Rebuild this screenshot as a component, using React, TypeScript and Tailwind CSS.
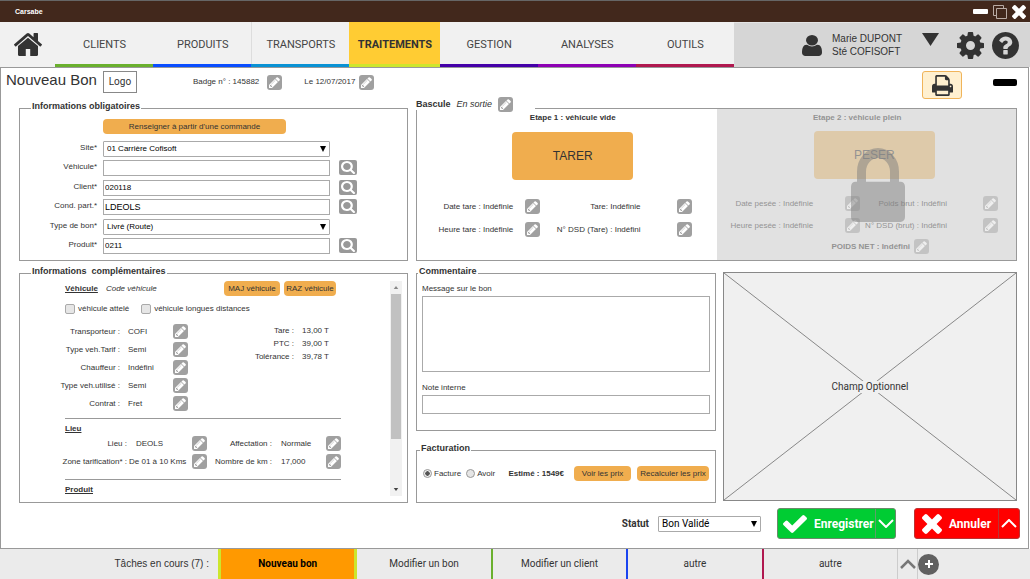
import React from "react";

type Glyph = { box: string; d: string };

const ICONS: Record<string, Glyph> = {
  home: {
    box: "90 250 1612 1290",
    d: "M1472 992v480q0 26-19 45t-45 19h-384v-384h-256v384h-384q-26 0-45-19t-19-45v-480q0-1 .5-3t.5-3l575-474 575 474q1 2 1 6zm223-69l-62 74q-8 9-21 11h-3q-13 0-21-7l-692-577-692 577q-12 8-24 7-13-2-21-11l-62-74q-8-10-7-23.5t11-21.5l719-599q32-26 76-26t76 26l244 204v-195q0-14 9-23t23-9h192q14 0 23 9t9 23v408l219 182q10 8 11 21.5t-7 23.5z",
  },
  user: {
    box: "256 128 1280 1536",
    d: "M1536 1399q0 109-62.5 187t-150.5 78h-854q-88 0-150.5-78t-62.5-187q0-85 8.5-160.5t31.5-152 58.5-131 94-89 134.5-34.5q131 128 313 128t313-128q76 0 134.5 34.5t94 89 58.5 131 31.5 152 8.5 160.5zm-256-887q0 159-112.5 271.5t-271.5 112.5-271.5-112.5-112.5-271.5 112.5-271.5 271.5-112.5 271.5 112.5 112.5 271.5z",
  },
  cog: {
    box: "128 128 1536 1536",
    d: "M1152 896q0-106-75-181t-181-75-181 75-75 181 75 181 181 75 181-75 75-181zm512-109v222q0 12-8 23t-20 13l-185 28q-19 54-39 91 35 50 107 138 10 12 10 25t-9 23q-27 37-99 108t-94 71q-12 0-26-9l-138-108q-44 23-91 38-16 136-29 186-7 28-36 28h-222q-14 0-24.5-8.5t-11.5-21.5l-28-184q-49-16-90-37l-141 107q-10 9-25 9-14 0-25-11-126-114-165-168-7-10-7-23 0-12 8-23 15-21 51-66.5t54-70.5q-27-50-41-99l-183-27q-13-2-21-12.5t-8-23.5v-222q0-12 8-23t19-13l186-28q14-46 39-92-40-57-107-138-10-12-10-24 0-10 9-23 26-36 98.5-107.5t94.5-71.5q13 0 26 10l138 107q44-23 91-38 16-136 29-186 7-28 36-28h222q14 0 24.5 8.5t11.5 21.5l28 184q49 16 90 37l142-107q9-9 24-9 13 0 25 10 129 119 165 170 7 8 7 22 0 12-8 23-15 21-51 66.5t-54 70.5q26 50 41 98l183 28q13 2 21 12.5t8 23.5z",
  },
  help: {
    box: "128 128 1536 1536",
    d: "M1024 1376v-192q0-14-9-23t-23-9h-192q-14 0-23 9t-9 23v192q0 14 9 23t23 9h192q14 0 23-9t9-23zm256-672q0-88-55.5-163t-138.5-116-170-41q-243 0-371 213-15 24 8 42l132 100q7 6 19 6 16 0 25-12 53-68 86-92 34-24 86-24 48 0 85.5 26t37.5 59q0 38-20 61t-68 45q-63 28-115.5 86.5t-52.5 125.5v36q0 14 9 23t23 9h192q14 0 23-9t9-23q0-19 21.5-49.5t54.5-49.5q32-18 49-28.5t46-35 44.5-48 28-60.5 12.5-81zm384 192q0 209-103 385.5t-279.5 279.5-385.5 103-385.5-103-279.5-279.5-103-385.5 103-385.5 279.5-279.5 385.5-103 385.5 103 279.5 279.5 103 385.5z",
  },
  print: {
    box: "64 128 1664 1536",
    d: "M448 1536h896v-256h-896v256zm0-640h896v-384h-160q-40 0-68-28t-28-68v-160h-640v640zm1152 64q0-26-19-45t-45-19-45 19-19 45 19 45 45 19 45-19 19-45zm128 0v416q0 13-9.5 22.5t-22.5 9.5h-224v160q0 40-28 68t-68 28h-960q-40 0-68-28t-28-68v-160h-224q-13 0-22.5-9.5t-9.5-22.5v-416q0-79 56.5-135.5t135.5-56.5h64v-544q0-40 28-68t68-28h672q40 0 88 20t76 48l152 152q28 28 48 76t20 88v256h64q79 0 135.5 56.5t56.5 135.5z",
  },
  pencil: {
    box: "128 128 1536 1536",
    d: "M491 1536l91-91-235-235-91 91v107h128v128h107zm523-928q0-22-22-22-10 0-17 7l-542 542q-7 7-7 17 0 22 22 22 10 0 17-7l542-542q7-7 7-17zm-54-192l416 416-832 832h-416v-416zm683 96q0 53-37 90l-166 166-416-416 166-165q36-38 90-38 53 0 91 38l235 234q37 39 37 91z",
  },
  search: {
    box: "64 128 1664 1664",
    d: "M1216 832q0-185-131.5-316.5t-316.5-131.5-316.5 131.5-131.5 316.5 131.5 316.5 316.5 131.5 316.5-131.5 131.5-316.5zm512 832q0 52-38 90t-90 38q-54 0-90-38l-343-342q-179 124-399 124-143 0-273.5-55.5t-225-150-150-225-55.5-273.5 55.5-273.5 150-225 225-150 273.5-55.5 273.5 55.5 225 150 150 225 55.5 273.5q0 220-124 399l343 343q37 37 37 90z",
  },
  lock: {
    box: "320 128 1152 1408",
    d: "M640 768h512v-192q0-106-75-181t-181-75-181 75-75 181v192zm832 96v576q0 40-28 68t-68 28h-960q-40 0-68-28t-28-68v-576q0-40 28-68t68-28h32v-192q0-184 132-316t316-132 316 132 132 316v192h32q40 0 68 28t28 68z",
  },
  check: {
    box: "121 334 1550 1188",
    d: "M1671 566q0 40-28 68l-724 724-136 136q-28 28-68 28t-68-28l-136-136-362-362q-28-28-28-68t28-68l136-136q28-28 68-28t68 28l294 295 656-657q28-28 68-28t68 28l136 136q28 28 28 68z",
  },
  times: {
    box: "302 366 1188 1188",
    d: "M1490 1322q0 40-28 68l-136 136q-28 28-68 28t-68-28l-294-294-294 294q-28 28-68 28t-68-28l-136-136q-28-28-28-68t28-68l294-294-294-294q-28-28-28-68t28-68l136-136q28-28 68-28t68 28l294 294 294-294q28-28 68-28t68 28l136 136q28 28 28 68t-28 68l-294 294 294 294q28 28 28 68z",
  },
};

function Icon({ name, className }: { name: string; className: string }) {
  const glyph = ICONS[name];
  return (
    <svg viewBox={glyph.box} preserveAspectRatio="none" fill="currentColor" aria-hidden="true" className={className}>
      <path d={glyph.d} />
    </svg>
  );
}

function EditButton({ label }: { label: string }) {
  return (
    <button aria-label={`Modifier ${label}`} className="flex size-[15px] shrink-0 items-center justify-center rounded-[3px] bg-[#a0a0a0] text-white">
      <Icon name="pencil" className="size-[11px]" />
    </button>
  );
}

function Panel({ title, className = "", children }: { title: string; className?: string; children: React.ReactNode }) {
  return (
    <fieldset className={`min-w-0 border border-[#999] ${className}`}>
      <legend className="h-4 whitespace-pre px-px text-[9px] leading-3 font-bold">{title}</legend>
      {children}
    </fieldset>
  );
}

function SelectBox({ id, value, className }: { id: string; value: string; className: string }) {
  return (
    <div className="relative">
      <select id={id} className={`block h-4 w-full appearance-none rounded-[1px] border border-[#aaa] bg-white pr-4 pl-[3px] text-black ${className}`}>
        <option>{value}</option>
      </select>
      <svg viewBox="0 0 6 6" className="pointer-events-none absolute top-[5px] right-1 size-[6px]" aria-hidden="true">
        <path d="M0 0h6L3 6z" />
      </svg>
    </div>
  );
}

const TABS = [
  { name: "CLIENTS", style: "flex-98 border-[#6ab02e]" },
  { name: "PRODUITS", style: "flex-98 border-[#0a4dff]" },
  { name: "TRANSPORTS", style: "flex-98 border-[#0a92d4] shadow-[inset_1px_0_#ddd]" },
  { name: "TRAITEMENTS", style: "flex-90 border-[#cde62c] bg-[#ffcc33] font-bold text-[#333]" },
  { name: "GESTION", style: "flex-98 border-[#4400a8]" },
  { name: "ANALYSES", style: "flex-98 border-[#8d00b3]" },
  { name: "OUTILS", style: "flex-98 border-[#b0184f]" },
];

const FIELDS = [
  { id: "site", label: "Site*", value: "01 Carrière Cofisoft", kind: "select" },
  { id: "vehicule", label: "Véhicule*", value: "", kind: "search" },
  { id: "client", label: "Client*", value: "020118", kind: "search" },
  { id: "cond", label: "Cond. part.*", value: "LDEOLS", kind: "search" },
  { id: "type", label: "Type de bon*", value: "Livré (Route)", kind: "select" },
  { id: "produit", label: "Produit*", value: "0211", kind: "search" },
];

const VEHICLE = [
  ["Transporteur :", "COFI"],
  ["Type veh.Tarif :", "Semi"],
  ["Chauffeur :", "Indéfini"],
  ["Type veh.utilisé :", "Semi"],
  ["Contrat :", "Fret"],
];

const WEIGHTS = [
  ["Tare :", "13,00 T"],
  ["PTC :", "39,00 T"],
  ["Tolérance :", "39,78 T"],
];

const PLACES = [
  ["Lieu :", "DEOLS", "Affectation :", "Normale"],
  ["Zone tarification* :", "De 01 à 10 Kms", "Nombre de km :", "17,000"],
];

const TASKS = [
  { name: "Nouveau bon", style: "border-x-[3px] border-[#cde62c] bg-[#ff9900] font-bold text-black" },
  { name: "Modifier un bon", style: "border-r-2 border-[#6ab02e]" },
  { name: "Modifier un client", style: "border-r-2 border-[#1a44f0]" },
  { name: "autre", style: "border-r-2 border-[#b0184f]" },
  { name: "autre", style: "border-r border-[#ccc]" },
];

function TitleBar() {
  return (
    <div className="flex h-[22px] items-center border-t border-[#666] bg-[#42281c] pr-1 pl-[15px] text-white">
      <span className="text-[7px] font-bold">Carsabe</span>
      <div className="ml-auto flex items-center gap-[5px]">
        <button aria-label="Réduire" className="h-[5px] w-[15px] rounded-[1px] bg-white" />
        <button aria-label="Restaurer">
          <svg viewBox="0 0 14 14" fill="none" stroke="#b9aba4" className="size-[14px]">
            <path d="M3.5 3.5h10v10h-10zM3 10.500H.5V.5h10V3" />
          </svg>
        </button>
        <button aria-label="Fermer">
          <Icon name="times" className="size-[14px]" />
        </button>
      </div>
    </div>
  );
}

function NavBar() {
  return (
    <nav className="flex h-[45px] bg-[#f1f1f1]">
      <a href="#accueil" aria-label="Accueil" className="flex w-[55px] shrink-0 items-center pl-[14px]">
        <Icon name="home" className="h-[23px] w-7" />
      </a>
      <div className="flex min-w-0 flex-679 font-[Roboto,sans-serif] text-[11px] text-[#444]">
        {TABS.map((tab) => (
          <a key={tab.name} href="#module" className={`flex min-w-0 items-center justify-center border-b-[3px] pt-[3px] pl-px ${tab.style}`}>
            {tab.name}
          </a>
        ))}
      </div>
      <div className="flex flex-296 items-center justify-end border-t border-[#e4e4e4] bg-[#d6d6d6]">
        <Icon name="user" className="mr-[10px] h-[21px] w-5" />
        <p className="mr-5 text-[10px] leading-[13px] whitespace-nowrap">
          Marie DUPONT
          <br />
          Sté COFISOFT
        </p>
        <button aria-label="Menu utilisateur" className="mr-[18px] mb-3">
          <svg viewBox="0 0 17 13" fill="currentColor" className="h-[13px] w-[17px]">
            <path d="M0 0h17L8.500 13z" />
          </svg>
        </button>
        <button aria-label="Paramètres" className="mr-2">
          <Icon name="cog" className="size-[27px]" />
        </button>
        <button aria-label="Aide" className="mr-[11px]">
          <Icon name="help" className="size-[27px]" />
        </button>
      </div>
    </nav>
  );
}

function PageHeader() {
  return (
    <header className="flex h-8 items-start pt-[3px] pr-[11px] pl-[5px]">
      <div className="flex h-[22px] items-center">
        <h1 className="mr-[6px] mb-1 text-[15px] leading-5">Nouveau Bon</h1>
        <span className="mr-[56px] flex h-[22px] w-[34px] items-center justify-center border border-[#888] font-[Roboto,sans-serif] text-[10px]">Logo</span>
        <span className="mr-2">Badge n° : 145882</span>
        <EditButton label="le badge" />
        <span className="mr-1 ml-[22px]">Le 12/07/2017</span>
        <EditButton label="la date" />
      </div>
      <button aria-label="Imprimer" className="ml-auto flex h-7 w-10 items-center justify-center rounded-[3px] border border-[#f0b45a] bg-[#fff0d0]">
        <Icon name="print" className="size-[21px]" />
      </button>
      <button aria-label="Replier" className="mt-2 ml-[31px] h-[7px] w-6 rounded-[2px] bg-black" />
    </header>
  );
}

function RequiredPanel() {
  return (
    <Panel title="Informations obligatoires" className="[&>legend]:ml-[11px]">
      <div className="pt-[3px] pr-[50px] pb-[6px]">
        <button className="mb-[7px] ml-[83px] block h-[15px] w-[183px] rounded-[4px] bg-[#f0ad4e]">Renseigner à partir d'une commande</button>
        <div className="flex h-[113px] flex-col justify-between">
          {FIELDS.map((field) => (
            <div key={field.id} className="grid grid-cols-[77px_1fr_18px]">
              <label htmlFor={field.id} className="text-right leading-[14px]">
                {field.label}
              </label>
              <div className="mr-[9px] ml-[6px]">
                {field.kind === "select" ? (
                  <SelectBox id={field.id} value={field.value} className="text-[8px]" />
                ) : (
                  <input
                    id={field.id}
                    defaultValue={field.value}
                    className={`block h-4 w-full border border-[#aaa] bg-white px-px text-black ${field.id === "cond" ? "text-[9px]" : "text-[8px]"}`}
                  />
                )}
              </div>
              {field.kind === "search" && (
                <button aria-label={`Rechercher ${field.label}`} className="flex h-[15px] w-[18px] items-center justify-center rounded-[2px] bg-[#999] text-white">
                  <Icon name="search" className="h-[13px] w-[14px]" />
                </button>
              )}
            </div>
          ))}
        </div>
      </div>
    </Panel>
  );
}

function DetailsPanel() {
  return (
    <Panel title="Informations  complémentaires" className="[&>legend]:ml-[11px]">
      <div className="flex pr-[5px] pb-[6px]">
        <div className="flex-1 pr-[49px] pl-[45px]">
          <div className="flex h-[15px] items-center">
            <b className="mr-2 underline">Véhicule</b>
            <i>Code véhicule</i>
            <button className="mr-1 ml-auto h-[15px] w-[56px] rounded-[4px] bg-[#f0ad4e]">MAJ véhicule</button>
            <button className="mr-[5px] h-[15px] w-[52px] rounded-[4px] bg-[#f0ad4e]">RAZ véhicule</button>
          </div>
          <div className="mt-2 flex h-[10px] items-center">
            <label className="mr-3 flex items-center gap-[3px]">
              <input type="checkbox" className="size-[10px] appearance-none rounded-[2px] border border-[#aaa] bg-[#e6e6e6]" />
              véhicule attelé
            </label>
            <label className="flex items-center gap-[3px]">
              <input type="checkbox" className="size-[10px] appearance-none rounded-[2px] border border-[#aaa] bg-[#e6e6e6]" />
              véhicule longues distances
            </label>
          </div>
          <div className="mt-[10px] flex justify-between">
            <div className="flex flex-col gap-[3px]">
              {VEHICLE.map(([label, value]) => (
                <div key={label} className="grid grid-cols-[55px_37px_15px] items-center gap-x-2">
                  <span className="justify-self-end whitespace-nowrap">{label}</span>
                  <span>{value}</span>
                  <EditButton label={label} />
                </div>
              ))}
            </div>
            <dl className="pr-3">
              {WEIGHTS.map(([label, value]) => (
                <div key={label} className="flex justify-end gap-2 leading-[13px]">
                  <dt>{label}</dt>
                  <dd>{value}</dd>
                </div>
              ))}
            </dl>
          </div>
          <hr className="mt-[7px] border-[#999]" />
          <b className="mt-1 block underline">Lieu</b>
          <div className="mt-px mb-[10px] flex flex-col gap-[3px]">
            {PLACES.map(([label, value, label2, value2]) => (
              <div key={label} className="grid grid-cols-[62px_65px_16px_64px_1fr_15px] items-center whitespace-nowrap">
                <span className="justify-self-end">{label}</span>
                <span className={label === "Lieu :" ? "pl-[9px]" : "pl-[2px]"}>{value}</span>
                <EditButton label={label} />
                <span className="justify-self-end">{label2}</span>
                <span className="pl-[9px]">{value2}</span>
                <EditButton label={label2} />
              </div>
            ))}
          </div>
          <hr className="border-[#999]" />
          <b className="mt-1 block underline">Produit</b>
        </div>
        <div className="flex w-3 flex-col items-center bg-[#f1f1f1]" aria-hidden="true">
          <svg viewBox="0 0 6 4" className="my-[5px] h-[3px] w-[6px] shrink-0">
            <path d="M0 4h6L3 0z" fill="#888" />
          </svg>
          <div className="w-[10px] flex-145 bg-[#c1c1c1]" />
          <div className="flex-44" />
          <svg viewBox="0 0 6 4" className="my-[5px] h-[3px] w-[6px] shrink-0">
            <path d="M0 0h6L3 4z" fill="#444" />
          </svg>
        </div>
      </div>
    </Panel>
  );
}

function Measure({ text, gap }: { text: string; gap: string }) {
  return (
    <div className={`flex items-center justify-end whitespace-nowrap ${gap}`}>
      <span>{text}</span>
      <EditButton label={text} />
    </div>
  );
}

function WeighingPanel() {
  return (
    <fieldset className="mt-[6px] min-w-0 border border-[#999]">
      <legend className="-ml-px flex h-1 items-center pr-[22px] text-[9px] leading-4">
        <div className="-mt-2 flex items-center">
          <b className="mr-[6px]">Bascule</b>
          <i className="mr-[6px]">En sortie</i>
          <EditButton label="la bascule" />
        </div>
      </legend>
      <div className="-mt-px grid grid-cols-2">
        <section className="h-[151px] pt-[3px]">
          <h2 className="pl-3 text-center leading-3 font-bold">Etape 1 : véhicule vide</h2>
          <div className="mt-2 flex justify-center pl-3">
            <button className="h-12 w-[121px] rounded-[4px] bg-[#f0ad4e] text-[12px]">TARER</button>
          </div>
          <div className="mt-[19px] grid grid-cols-[123fr_151fr] gap-y-2 pr-[25px]">
            <Measure text="Date tare : Indéfinie" gap="gap-3" />
            <Measure text="Tare: Indéfinie" gap="gap-9" />
            <Measure text="Heure tare : Indéfinie" gap="gap-3" />
            <Measure text="N° DSD (Tare) : Indéfini" gap="gap-9" />
          </div>
        </section>
        <section aria-disabled="true" className="relative h-[151px] bg-[#e1e1e1] pt-[3px]">
          <div className="opacity-45">
            <h2 className="pr-[18px] text-center leading-3 font-bold">Etape 2 : véhicule plein</h2>
            <div className="mt-[7px] flex justify-center pl-4">
              <button disabled className="h-12 w-[121px] rounded-[4px] bg-[#dcaf68] text-[12px]">
                PESER
              </button>
            </div>
            <div className="mt-[17px] grid grid-cols-[144fr_138fr] gap-y-[7px] pr-[18px]">
              <Measure text="Date pesée : Indéfinie" gap="gap-8" />
              <Measure text="Poids brut : Indéfini" gap="gap-9" />
              <Measure text="Heure pesée : Indéfinie" gap="gap-8" />
              <Measure text="N° DSD (brut) : Indéfini" gap="gap-9" />
            </div>
            <div className="mt-[6px] flex items-center justify-center gap-1 pl-7 font-bold">
              <span>POIDS NET : Indéfini</span>
              <EditButton label="le poids net" />
            </div>
          </div>
          <div className="absolute inset-x-0 top-[39px] flex justify-center pl-6 text-[#808080] opacity-50">
            <Icon name="lock" className="h-[74px] w-[54px]" />
          </div>
        </section>
      </div>
    </fieldset>
  );
}

function CommentPanel() {
  return (
    <Panel title="Commentaire" className="[&>legend]:ml-px">
      <div className="px-[5px] pb-4">
        <label htmlFor="message" className="mt-[3px] mb-[2px] block leading-[10px]">
          Message sur le bon
        </label>
        <textarea id="message" className="block h-[76px] w-full resize-none border border-[#aaa] p-1" />
        <label htmlFor="note" className="mt-[11px] mb-[2px] block leading-[10px]">
          Note interne
        </label>
        <input id="note" className="block h-[19px] w-full border border-[#aaa] px-1" />
      </div>
    </Panel>
  );
}

function BillingPanel() {
  return (
    <Panel title="Facturation" className="[&>legend]:ml-[3px]">
      <div className="mt-2 mb-[21px] flex h-[15px] items-center px-[6px] whitespace-nowrap">
        <label className="mr-[5px] flex items-center gap-[2px]">
          <input type="radio" name="facture" defaultChecked className="size-[9px] appearance-none rounded-full border border-[#999] bg-[#eee] checked:bg-[radial-gradient(#555_0_40%,#eee_50%)]" />
          Facture
        </label>
        <label className="flex items-center gap-[2px]">
          <input type="radio" name="facture" className="size-[9px] appearance-none rounded-full border border-[#999] bg-[#e6e6e6] checked:bg-[radial-gradient(#555_0_40%,#eee_50%)]" />
          Avoir
        </label>
        <b className="ml-auto">Estimé : 1549€</b>
        <button className="mr-[6px] ml-[10px] h-[15px] w-[57px] rounded-[4px] bg-[#f0ad4e]">Voir les prix</button>
        <button className="h-[15px] w-[72px] rounded-[4px] bg-[#f0ad4e]">Recalculer les prix</button>
      </div>
    </Panel>
  );
}

function OptionalArea() {
  return (
    <div className="relative mt-[7px] mb-[2px] flex items-center justify-center border border-[#888] bg-[#f0f0f0]">
      <svg viewBox="0 0 100 100" preserveAspectRatio="none" className="absolute inset-0 size-full" aria-hidden="true">
        <path d="M0 0L100 100M100 0L0 100" stroke="#888" vectorEffect="non-scaling-stroke" />
      </svg>
      <span className="relative bg-[#f0f0f0] px-px font-[Roboto,sans-serif] text-[10px] leading-3">Champ Optionnel</span>
    </div>
  );
}

function ActionBar() {
  return (
    <div className="flex items-center justify-end pt-[5px] pr-2 pb-[7px] font-[Roboto,sans-serif]">
      <label htmlFor="statut" className="mr-[9px] text-[10px] font-bold">
        Statut
      </label>
      <div className="w-[103px]">
        <SelectBox id="statut" value="Bon Validé" className="text-[10px]" />
      </div>
      <div className="ml-4 flex h-[31px] w-[119px] rounded-[3px] border border-[#6a8a6a] bg-[#00cc33] text-white">
        <button className="flex flex-1 items-center gap-[7px] pl-[5px] text-[12px] font-bold">
          <Icon name="check" className="h-[18px] w-6 shrink-0" />
          Enregistrer
        </button>
        <button aria-label="Plus d'options d'enregistrement" className="flex w-5 items-center justify-center border-l border-[#5f9f6a]">
          <svg viewBox="0 0 16 9" fill="none" stroke="currentColor" strokeWidth="2" className="h-[9px] w-4">
            <path d="M1 1l7 7 7-7" />
          </svg>
        </button>
      </div>
      <div className="ml-[18px] flex h-[31px] w-[106px] rounded-[3px] border border-[#b33] bg-[#ff0000] text-white">
        <button className="flex flex-1 items-center gap-[7px] pl-[7px] text-[12px] font-bold">
          <Icon name="times" className="size-5 shrink-0" />
          Annuler
        </button>
        <button aria-label="Plus d'options d'annulation" className="flex w-[21px] items-center justify-center border-l border-[#b33]">
          <svg viewBox="0 0 16 9" fill="none" stroke="currentColor" strokeWidth="2" className="h-[9px] w-4">
            <path d="M1 8l7-7 7 7" />
          </svg>
        </button>
      </div>
    </div>
  );
}

function TaskBar() {
  return (
    <footer className="flex h-[30px] items-stretch bg-[#ebebeb] text-[10px]">
      <div className="flex flex-218 items-center justify-end">
        <span className="mr-[9px]">Tâches en cours (7) :</span>
      </div>
      <div className="flex flex-680 font-[Roboto,sans-serif]">
        {TASKS.map((task, index) => (
          <a key={index} href="#tache" className={`flex flex-1 items-center justify-center ${task.style}`}>
            {task.name}
          </a>
        ))}
      </div>
      <div className="flex flex-132 items-center">
        <button aria-label="Plus de tâches" className="flex h-full w-5 items-center justify-center border-r border-[#ccc] text-[#777]">
          <svg viewBox="0 0 16 10" fill="none" stroke="currentColor" strokeWidth="2.500" className="h-[10px] w-4">
            <path d="M1 9l7-7 7 7" />
          </svg>
        </button>
        <button aria-label="Nouvelle tâche" className="flex size-[21px] items-center justify-center rounded-full bg-[#606060] text-white">
          <svg viewBox="0 0 8 8" fill="none" stroke="currentColor" strokeWidth="2" className="size-2">
            <path d="M4 0v8M0 4h8" />
          </svg>
        </button>
      </div>
    </footer>
  );
}

export default function App() {
  return (
    <div className="flex min-h-screen flex-col bg-white font-['Liberation_Sans',Arial,sans-serif] text-[8px] leading-3 text-[#333]">
      <TitleBar />
      <NavBar />
      <main className="mr-px flex-1 border border-[#999]">
        <PageHeader />
        <div className="grid grid-cols-[389fr_601fr] gap-x-2 pr-[11px] pl-[18px]">
          <div className="flex min-w-0 flex-col gap-1">
            <RequiredPanel />
            <DetailsPanel />
          </div>
          <div className="flex min-w-0 flex-col gap-1">
            <WeighingPanel />
            <div className="grid flex-1 grid-cols-[300fr_294fr] gap-x-[7px]">
              <div className="flex min-w-0 flex-col justify-between">
                <CommentPanel />
                <BillingPanel />
              </div>
              <OptionalArea />
            </div>
          </div>
        </div>
        <ActionBar />
      </main>
      <TaskBar />
    </div>
  );
}
